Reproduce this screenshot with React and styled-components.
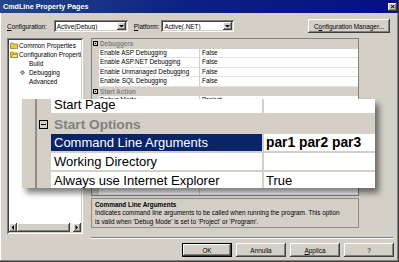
import React from "react";
import styled, { createGlobalStyle } from "styled-components";

const Global = createGlobalStyle`
  html, body { margin: 0; padding: 0; background: #d4d0c8; }
  body { font-family: "Liberation Sans", Arial, sans-serif; }
`;

const raised = `
  box-shadow: inset -1px -1px #404040, inset 1px 1px #ffffff, inset -2px -2px #808080, inset 2px 2px #d4d0c8;
`;
const sunken = `
  box-shadow: inset 1px 1px #808080, inset -1px -1px #ffffff, inset 2px 2px #404040, inset -2px -2px #d4d0c8;
`;

const Window = styled.div`
  position: relative;
  width: 399px;
  height: 262px;
  box-sizing: border-box;
  background: #d4d0c8;
  border-right: 1px solid #404040;
  border-bottom: 1px solid #404040;
  box-shadow: inset -1px -1px #808080, inset 1px 0 #ffffff;
  display: flex;
  flex-direction: column;
  overflow: hidden;
  font-size: 6.4px;
  color: #000;
`;

const TitleBar = styled.div`
  height: 13px;
  flex: none;
  display: flex;
  align-items: center;
  justify-content: space-between;
  padding: 0 1px 0 3px;
  background: linear-gradient(to right, #25478c 0%, #0c2282 45%, #060f84 100%);
  color: #fff;
  font-weight: bold;
  font-size: 7.2px;
`;

const CloseBtn = styled.div`
  width: 9px;
  height: 8px;
  background: #d4d0c8;
  ${raised}
  display: flex;
  align-items: center;
  justify-content: center;
  color: #000;
  font-size: 8px;
  line-height: 8px;
  font-weight: bold;
`;

const ConfigRow = styled.div`
  margin-top: 6px;
  height: 14px;
  flex: none;
  display: flex;
  align-items: center;
  padding: 0 8px 0 7px;
`;

const Label = styled.span`
  margin-left: ${(p) => p.$ml || 0}px;
  white-space: nowrap;
  u { text-decoration: underline; }
`;

const Combo = styled.div`
  margin-left: ${(p) => p.$ml}px;
  width: ${(p) => p.$w}px;
  height: 12px;
  box-sizing: border-box;
  background: #fff;
  ${sunken}
  display: flex;
  align-items: center;
  padding: 2px;
`;

const ComboText = styled.span`
  flex: 1;
  padding-left: 1px;
  white-space: nowrap;
  overflow: hidden;
`;

const ComboArrow = styled.div`
  width: 9px;
  height: 8px;
  background: #d4d0c8;
  ${raised}
  display: flex;
  align-items: center;
  justify-content: center;
`;

const Button = styled.div`
  margin-left: ${(p) => (p.$auto ? "auto" : "0")};
  width: ${(p) => p.$w}px;
  height: 14px;
  box-sizing: border-box;
  background: #d4d0c8;
  ${(p) =>
    p.$default
      ? `box-shadow: inset 0 0 0 1px #000, inset -2px -2px #404040, inset 2px 2px #ffffff, inset -3px -3px #808080;`
      : raised}
  display: flex;
  align-items: center;
  justify-content: center;
  white-space: nowrap;
  u { text-decoration: underline; }
`;

const Main = styled.div`
  margin-top: 5px;
  height: 196px;
  flex: none;
  display: flex;
  gap: 8px;
  padding-left: 7px;
`;

const Tree = styled.div`
  width: 76px;
  height: 196px;
  box-sizing: border-box;
  padding: 2px;
  background: #fff;
  ${sunken}
  display: flex;
  flex-direction: column;
`;

const TreeList = styled.div`
  flex: 1;
  overflow: hidden;
  padding-top: 0.5px;
`;

const TreeItem = styled.div`
  height: 9px;
  display: flex;
  align-items: center;
  padding-left: ${(p) => p.$indent}px;
  white-space: nowrap;
`;

const IconSlot = styled.span`
  width: ${(p) => p.$w}px;
  height: 7px;
  flex: none;
  margin-right: ${(p) => p.$gap}px;
  display: flex;
  align-items: center;
  justify-content: center;
`;

const HScroll = styled.div`
  height: 9px;
  flex: none;
  display: flex;
  background: #e9e7e2;
`;

const ScrollBtn = styled.div`
  width: 8px;
  height: 9px;
  box-sizing: border-box;
  background: #d4d0c8;
  ${raised}
  display: flex;
  align-items: center;
  justify-content: center;
`;

const Thumb = styled.div`
  width: 53px;
  height: 9px;
  background: #d4d0c8;
  ${raised}
`;

const Track = styled.div`
  flex: 1;
`;

const RightCol = styled.div`
  width: 268px;
  display: flex;
  flex-direction: column;
  gap: 2px;
`;

const Grid = styled.div`
  height: 158px;
  box-sizing: border-box;
  border: 1px solid #808080;
  background: #fff;
  overflow: hidden;
  display: flex;
  flex-direction: column;
`;

const PropRow = styled.div`
  display: grid;
  grid-template-columns: 7px 100px 1fr;
  height: 9.5px;
  flex: none;
`;

const GridFill = styled.div`
  flex: 1;
  display: grid;
  grid-template-columns: 7px 100px 1fr;
`;

const Gutter = styled.div`
  background: #d4d0c8;
  display: flex;
  align-items: center;
  padding-left: ${(p) => p.$pl}px;
`;

const PropName = styled.div`
  box-sizing: border-box;
  border-bottom: 1px solid #e4e2dc;
  padding-left: 1px;
  line-height: 8.5px;
  white-space: nowrap;
  overflow: hidden;
`;

const PropValue = styled.div`
  box-sizing: border-box;
  border-bottom: 1px solid #e4e2dc;
  border-left: 1px solid #d4d0c8;
  padding-left: 2px;
  line-height: 8.5px;
  white-space: nowrap;
  overflow: hidden;
`;

const Category = styled.div`
  grid-column: 2 / -1;
  background: #d4d0c8;
  color: #808080;
  font-weight: bold;
  padding-left: 1px;
  line-height: 9.5px;
  white-space: nowrap;
`;

const MinusBox = styled.span`
  width: ${(p) => p.$s}px;
  height: ${(p) => p.$s}px;
  box-sizing: border-box;
  border: 1px solid #000;
  display: flex;
  align-items: center;
  justify-content: center;
  &::after {
    content: "";
    width: ${(p) => p.$s - 4}px;
    height: 1px;
    background: #000;
  }
`;

const Description = styled.div`
  height: 30px;
  box-sizing: border-box;
  border: 1px solid #8c8c8c;
  padding: 1.5px 3px;
  line-height: 8.6px;
  white-space: nowrap;
  overflow: hidden;
`;

const DescTitle = styled.div`
  font-weight: bold;
`;

const Separator = styled.div`
  margin: 3px 5px 0 91px;
  height: 0;
  border-top: 1px solid #808080;
  border-bottom: 1px solid #ffffff;
  flex: none;
`;

const ButtonRow = styled.div`
  margin-top: 4px;
  height: 14px;
  flex: none;
  display: flex;
  justify-content: flex-end;
  gap: 4px;
  padding-right: 4px;
`;

/* magnifier overlay */
const Magnifier = styled.div`
  position: absolute;
  left: 22px;
  top: 99px;
  width: 353px;
  height: 89px;
  background: #d4d0c8;
  overflow: hidden;
  display: flex;
  box-shadow: 4px 5px 6px rgba(0, 0, 0, 0.5);
`;

const MagStrip = styled.div`
  width: 13px;
  flex: none;
  background: #d4d0c8;
`;

const MagEdge = styled.div`
  width: 2px;
  flex: none;
  background: #8e8e8e;
`;

const MagRows = styled.div`
  flex: 1;
  margin-top: -3px;
  display: flex;
  flex-direction: column;
`;

const MagRow = styled.div`
  display: grid;
  grid-template-columns: 14px 211px 1fr;
  height: 19px;
  flex: none;
`;

const MagName = styled.div`
  box-sizing: border-box;
  background: ${(p) => (p.$selected ? "#0a246a" : "#fff")};
  color: ${(p) => (p.$selected ? "#fff" : "#000")};
  border-bottom: 2px solid #d4d0c8;
  padding-left: 3px;
  font-size: 13px;
  line-height: 17px;
  white-space: nowrap;
  overflow: hidden;
`;

const MagValue = styled.div`
  box-sizing: border-box;
  background: #fff;
  border-left: 2px solid #d4d0c8;
  border-bottom: 2px solid #d4d0c8;
  padding-left: 2px;
  font-size: ${(p) => (p.$bold ? "13.8px" : "13px")};
  font-weight: ${(p) => (p.$bold ? "bold" : "normal")};
  line-height: 17px;
  white-space: nowrap;
  overflow: hidden;
`;

const MagCategory = styled.div`
  grid-column: 2 / -1;
  background: #d4d0c8;
  color: #808080;
  font-weight: bold;
  font-size: 13.7px;
  line-height: 19px;
  padding-left: 3px;
  white-space: nowrap;
`;

const Folder = ({ open }) => (
  <svg width="8" height="7" viewBox="0 0 8 7">
    <path d="M0.5 1.5 L0.5 6.5 L7.5 6.5 L7.5 2 L3.5 2 L3 1 L1 1 Z" fill="#e8c84a" stroke="#806000" strokeWidth="0.6" />
    {open && <path d="M1.5 6.5 L2.5 3.5 L8 3.5 L7 6.5 Z" fill="#f8e890" stroke="#806000" strokeWidth="0.5" />}
  </svg>
);

const DebugIcon = () => (
  <svg width="5" height="5" viewBox="0 0 5 5">
    <path d="M2.5 0 L5 2.5 L2.5 5 L0 2.5 Z" fill="#6a6a6a" />
    <path d="M2.5 1.2 L3.8 2.5 L2.5 3.8 L1.2 2.5 Z" fill="#c8c8c8" />
  </svg>
);

const Arrow = ({ dir }) => {
  const d =
    dir === "down" ? "M0 0 L5 0 L2.5 2.5 Z" : dir === "left" ? "M3 0 L3 5 L0.5 2.5 Z" : "M0.5 0 L0.5 5 L3 2.5 Z";
  const w = dir === "down" ? 5 : 3.5;
  const h = dir === "down" ? 3 : 5;
  return (
    <svg width={w} height={h} viewBox={`0 0 ${w} ${h}`}>
      <path d={d} fill="#000" />
    </svg>
  );
};

const smallRows = [
  { cat: "Debuggers" },
  { n: "Enable ASP Debugging", v: "False" },
  { n: "Enable ASP.NET Debugging", v: "False" },
  { n: "Enable Unmanaged Debugging", v: "False" },
  { n: "Enable SQL Debugging", v: "False" },
  { cat: "Start Action" },
  { n: "Debug Mode", v: "Project" },
];

export default function App() {
  return (
    <>
      <Global />
      <Window>
        <TitleBar>
          <span>CmdLine Property Pages</span>
          <CloseBtn>×</CloseBtn>
        </TitleBar>

        <ConfigRow>
          <Label>
            <u>C</u>onfiguration:
          </Label>
          <Combo $ml={7} $w={74}>
            <ComboText>Active(Debug)</ComboText>
            <ComboArrow>
              <Arrow dir="down" />
            </ComboArrow>
          </Combo>
          <Label $ml={6}>
            <u>P</u>latform:
          </Label>
          <Combo $ml={2} $w={73}>
            <ComboText>Active(.NET)</ComboText>
            <ComboArrow>
              <Arrow dir="down" />
            </ComboArrow>
          </Combo>
          <Button $auto $w={82}>
            C<u>o</u>nfiguration Manager...
          </Button>
        </ConfigRow>

        <Main>
          <Tree>
            <TreeList>
              <TreeItem $indent={1}>
                <IconSlot $w={8} $gap={1}>
                  <Folder />
                </IconSlot>
                Common Properties
              </TreeItem>
              <TreeItem $indent={1}>
                <IconSlot $w={8} $gap={1}>
                  <Folder open />
                </IconSlot>
                Configuration Properties
              </TreeItem>
              <TreeItem $indent={11}>
                <IconSlot $w={5} $gap={4} />
                Build
              </TreeItem>
              <TreeItem $indent={11}>
                <IconSlot $w={5} $gap={4}>
                  <DebugIcon />
                </IconSlot>
                Debugging
              </TreeItem>
              <TreeItem $indent={11}>
                <IconSlot $w={5} $gap={4} />
                Advanced
              </TreeItem>
            </TreeList>
            <HScroll>
              <ScrollBtn>
                <Arrow dir="left" />
              </ScrollBtn>
              <Thumb />
              <Track />
              <ScrollBtn>
                <Arrow dir="right" />
              </ScrollBtn>
            </HScroll>
          </Tree>

          <RightCol>
            <Grid>
              {smallRows.map((r, i) =>
                r.cat ? (
                  <PropRow key={i}>
                    <Gutter $pl={1}>
                      <MinusBox $s={5} />
                    </Gutter>
                    <Category>{r.cat}</Category>
                  </PropRow>
                ) : (
                  <PropRow key={i}>
                    <Gutter $pl={1} />
                    <PropName>{r.n}</PropName>
                    <PropValue>{r.v}</PropValue>
                  </PropRow>
                )
              )}
              <GridFill>
                <Gutter $pl={1} />
                <PropName />
                <PropValue />
              </GridFill>
            </Grid>
            <Description>
              <DescTitle>Command Line Arguments</DescTitle>
              Indicates command line arguments to be called when running the program. This option
              <br />
              is valid when 'Debug Mode' is set to 'Project' or 'Program'.
            </Description>
          </RightCol>
        </Main>

        <Separator />

        <ButtonRow>
          <Button $default $w={50}>OK</Button>
          <Button $w={50}>Annulla</Button>
          <Button $w={50}>
            <u>A</u>pplica
          </Button>
          <Button $w={50}>?</Button>
        </ButtonRow>

        <Magnifier>
          <MagStrip />
          <MagEdge />
          <MagRows>
            <MagRow>
              <Gutter $pl={2} />
              <MagName>Start Page</MagName>
              <MagValue />
            </MagRow>
            <MagRow>
              <Gutter $pl={2}>
                <MinusBox $s={9} />
              </Gutter>
              <MagCategory>Start Options</MagCategory>
            </MagRow>
            <MagRow>
              <Gutter $pl={2} />
              <MagName $selected>Command Line Arguments</MagName>
              <MagValue $bold>par1 par2 par3</MagValue>
            </MagRow>
            <MagRow>
              <Gutter $pl={2} />
              <MagName>Working Directory</MagName>
              <MagValue />
            </MagRow>
            <MagRow>
              <Gutter $pl={2} />
              <MagName>Always use Internet Explorer</MagName>
              <MagValue>True</MagValue>
            </MagRow>
          </MagRows>
        </Magnifier>
      </Window>
    </>
  );
}
